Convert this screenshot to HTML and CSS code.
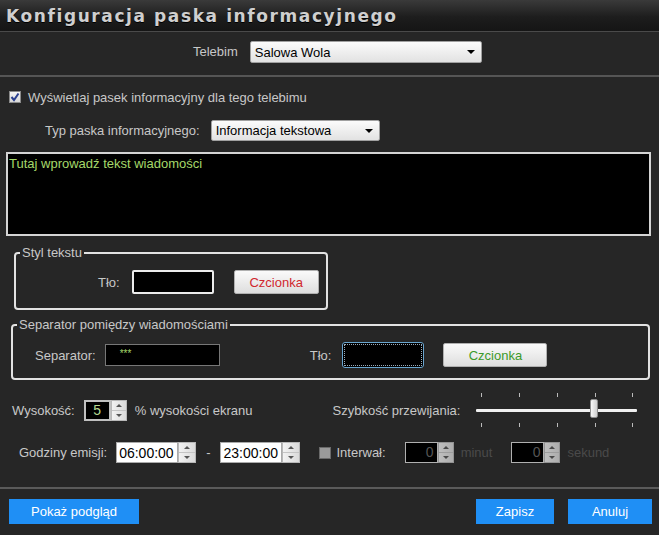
FILE: index.html
```html
<!DOCTYPE html>
<html lang="pl">

<head>
    <meta charset="UTF-8">
    <meta name="viewport" content="width=device-width, initial-scale=1.0">
    <title>Konfiguracja paska informacyjnego</title>
    <link rel="stylesheet" href="styles.css">
</head>

<body>
    <div class="dialog">
        <header class="title-bar">
            <h1 class="title">Konfiguracja paska informacyjnego</h1>
        </header>

        <section class="telebim-row">
            <span class="label">Telebim</span>
            <div class="select select-telebim">Salowa Wola<span class="arrow"></span></div>
        </section>

        <section class="check-row">
            <span class="checkbox">
                <svg width="10" height="10" viewBox="0 0 10 10"><path d="M1.5 5 L4 8 L8.5 1.5" fill="none" stroke="#2a3f8f" stroke-width="2"/></svg>
            </span>
            <span>Wyświetlaj pasek informacyjny dla tego telebimu</span>
        </section>

        <section class="type-row">
            <span class="label">Typ paska informacyjnego:</span>
            <div class="select select-type">Informacja tekstowa<span class="arrow"></span></div>
        </section>

        <div class="message">Tutaj wprowadź tekst wiadomości</div>

        <fieldset class="group group-style">
            <legend>Styl tekstu</legend>
            <div class="group-row style-row">
                <span class="label">Tło:</span>
                <div class="color-box"></div>
                <button class="font-button font-red">Czcionka</button>
            </div>
        </fieldset>

        <fieldset class="group group-separator">
            <legend>Separator pomiędzy wiadomościami</legend>
            <div class="group-row separator-row">
                <span class="label">Separator:</span>
                <div class="separator-input">***</div>
                <span class="label sep-bg-label">Tło:</span>
                <div class="color-box color-box-focus"><span class="focus-ring"></span></div>
                <button class="font-button font-green">Czcionka</button>
            </div>
        </fieldset>

        <section class="height-row">
            <span class="label">Wysokość:</span>
            <div class="spin spin-height">
                <div class="spin-value">5</div>
                <div class="spin-arrows"><span class="up"></span><span class="down"></span></div>
            </div>
            <span class="label">% wysokości ekranu</span>
            <span class="label speed-label">Szybkość przewijania:</span>
            <div class="slider">
                <div class="ticks"><i></i><i></i><i></i><i></i><i></i></div>
                <div class="track"></div>
                <div class="ticks"><i></i><i></i><i></i><i></i><i></i></div>
                <div class="thumb" style="left: 114px"></div>
            </div>
        </section>

        <section class="hours-row">
            <span class="label">Godziny emisji:</span>
            <div class="spin spin-time">
                <div class="spin-value">06:00:00</div>
                <div class="spin-arrows"><span class="up"></span><span class="down"></span></div>
            </div>
            <span class="label dash">-</span>
            <div class="spin spin-time">
                <div class="spin-value">23:00:00</div>
                <div class="spin-arrows"><span class="up"></span><span class="down"></span></div>
            </div>
            <span class="checkbox checkbox-off"></span>
            <span class="label">Interwał:</span>
            <div class="spin spin-off spin-minutes">
                <div class="spin-value">0</div>
                <div class="spin-arrows"><span class="up"></span><span class="down"></span></div>
            </div>
            <span class="label label-off">minut</span>
            <div class="spin spin-off spin-seconds">
                <div class="spin-value">0</div>
                <div class="spin-arrows"><span class="up"></span><span class="down"></span></div>
            </div>
            <span class="label label-off">sekund</span>
        </section>

        <footer class="footer">
            <button class="blue-button preview-button">Pokaż podgląd</button>
            <button class="blue-button save-button">Zapisz</button>
            <button class="blue-button cancel-button">Anuluj</button>
        </footer>
    </div>
</body>

</html>
```

FILE: styles.css
```css
body {
    margin: 0;
    background: #262626;
    overflow: hidden;
}

.dialog {
    width: 659px;
    height: 535px;
    background: #262626;
    color: #c8c8c8;
    font-family: "Liberation Sans", Arial, sans-serif;
    font-size: 13px;
}

.title-bar {
    height: 32px;
    box-sizing: border-box;
    padding-left: 6px;
    display: flex;
    align-items: center;
    background: linear-gradient(#3a3a3a, #1d1d1d 55%, #151515);
    border-bottom: 1px solid #4a4a4a;
}

.title {
    margin: 0;
    font-family: "DejaVu Sans", sans-serif;
    font-size: 17px;
    font-weight: bold;
    letter-spacing: 1.6px;
    color: #cfcfcf;
    text-shadow: 0 1px 0 #000;
}

.label {
    white-space: nowrap;
}

.select {
    height: 22px;
    box-sizing: border-box;
    padding: 0 6px 0 4px;
    display: flex;
    align-items: center;
    justify-content: space-between;
    background: linear-gradient(#fbfbfb, #e2e2e2);
    border: 1px solid #a0a0a0;
    border-radius: 2px;
    color: #000;
}

.arrow {
    width: 0;
    height: 0;
    border-left: 4px solid transparent;
    border-right: 4px solid transparent;
    border-top: 4px solid #000;
}

.telebim-row {
    height: 45px;
    box-sizing: border-box;
    padding: 9px 0 0 193px;
    display: flex;
    align-items: flex-start;
    gap: 12px;
    border-bottom: 2px solid #555;
}

.telebim-row .label {
    line-height: 22px;
}

.select-telebim {
    width: 232px;
}

.check-row {
    height: 20px;
    margin-top: 10px;
    padding-left: 9px;
    display: flex;
    align-items: center;
    gap: 7px;
}

.checkbox {
    width: 12px;
    height: 12px;
    box-sizing: border-box;
    display: flex;
    align-items: center;
    justify-content: center;
    background: linear-gradient(#f4f4f4, #d8d8d8);
    border: 1px solid #8a8a8a;
}

.checkbox-off {
    margin-left: 19px;
    background: #9a9a9a;
    border-color: #6a6a6a;
}

.type-row {
    height: 21px;
    margin-top: 13px;
    padding-left: 45px;
    display: flex;
    align-items: center;
    gap: 11px;
}

.select-type {
    width: 169px;
    height: 21px;
}

.message {
    height: 84px;
    margin: 11px 8px 0 6px;
    box-sizing: border-box;
    padding: 2px 0 0 1px;
    background: #000;
    border: 2px solid #d4d4d4;
    color: #a5d86a;
    line-height: 16px;
}

.group {
    margin: 10px 0 0;
    padding: 0;
    border: 2px solid #e2e2e2;
    border-radius: 4px;
    box-sizing: border-box;
}

.group legend {
    margin-left: 4px;
    padding: 0 2px;
    line-height: 14px;
}

.group-row {
    display: flex;
    align-items: center;
}

.group-style {
    width: 314px;
    margin-left: 14px;
}

.style-row {
    height: 24px;
    margin: 10px 0 14px;
    padding-left: 82px;
}

.color-box {
    width: 82px;
    height: 24px;
    margin-left: 12px;
    box-sizing: border-box;
    background: #000;
    border: 2px solid #ececec;
    border-radius: 2px;
}

.font-button {
    height: 24px;
    margin-left: 20px;
    padding: 0;
    width: 85px;
    font-family: inherit;
    font-size: 13px;
    background: linear-gradient(#fafafa, #dedede);
    border: 1px solid #b0b0b0;
    border-radius: 2px;
}

.font-red {
    color: #d0282e;
}

.font-green {
    width: 104px;
    margin-left: 19px;
    color: #3c9a2a;
}

.group-separator {
    width: 639px;
    margin: 8px 0 0 11px;
}

.separator-row {
    height: 26px;
    margin: 10px 0 10px;
    padding-left: 22px;
}

.separator-input {
    width: 115px;
    height: 22px;
    margin-left: 9px;
    box-sizing: border-box;
    padding: 2px 0 0 14px;
    background: #000;
    border: 1px solid #777;
    color: #a5d86a;
    font-size: 10px;
    line-height: 14px;
}

.sep-bg-label {
    margin-left: 90px;
}

.color-box-focus {
    height: 26px;
    margin-left: 11px;
    padding: 1px;
    border: 1px solid #6aa6d0;
    border-radius: 3px;
}

.focus-ring {
    display: block;
    height: 100%;
    box-sizing: border-box;
    border: 1px dotted #9ab;
}

.height-row {
    height: 34px;
    margin-top: 13px;
    padding-left: 12px;
    display: flex;
    align-items: center;
}

.spin {
    display: flex;
    height: 21px;
    box-sizing: border-box;
}

.spin-value {
    flex: 1;
    box-sizing: border-box;
    line-height: 17px;
}

.spin-arrows {
    width: 16px;
    display: flex;
    flex-direction: column;
    background: linear-gradient(90deg, #f2f2f2, #dadada);
    border: 1px solid #b8b8b8;
    box-sizing: border-box;
}

.spin-arrows span {
    flex: 1;
    display: flex;
    align-items: center;
    justify-content: center;
}

.spin-arrows .up {
    border-bottom: 1px solid #c4c4c4;
}

.spin-arrows .up::after,
.spin-arrows .down::after {
    content: "";
    border-left: 3px solid transparent;
    border-right: 3px solid transparent;
}

.spin-arrows .up::after {
    border-bottom: 3px solid #555;
}

.spin-arrows .down::after {
    border-top: 3px solid #555;
}

.spin-height {
    width: 43px;
    margin: 0 8px 0 9px;
}

.spin-height .spin-value {
    background: #000;
    border: 2px solid #c0c0c0;
    color: #b6d890;
    text-align: center;
    font-size: 14px;
}

.speed-label {
    margin-left: 80px;
}

.slider {
    position: relative;
    width: 161px;
    height: 34px;
    margin-left: 16px;
    display: flex;
    flex-direction: column;
    justify-content: space-between;
}

.ticks {
    height: 4px;
    padding: 0 4px 0 5px;
    display: flex;
    justify-content: space-between;
}

.ticks i {
    width: 1px;
    background: #bbb;
}

.track {
    height: 3px;
    background: #f0f0f0;
    border-radius: 1px;
}

.thumb {
    position: absolute;
    top: 6px;
    width: 8px;
    height: 19px;
    box-sizing: border-box;
    background: linear-gradient(90deg, #f8f8f8, #cfcfcf);
    border: 1px solid #8c8c8c;
    border-radius: 2px;
}

.hours-row {
    height: 21px;
    margin-top: 15px;
    padding-left: 19px;
    display: flex;
    align-items: center;
}

.spin-time {
    width: 80px;
    margin-left: 9px;
}

.spin-time .spin-value {
    padding: 2px 0 0 2px;
    background: #fff;
    border: 1px solid #aaa;
    color: #000;
    font-size: 14px;
}

.spin-time .spin-arrows {
    width: 18px;
}

.dash {
    margin-left: 10px;
}

.hours-row .dash + .spin-time {
    margin-left: 10px;
}

.hours-row .checkbox-off + .label {
    margin-left: 5px;
}

.spin-off {
    width: 49px;
}

.spin-off .spin-value {
    padding: 1px 3px 0 0;
    background: #000;
    border: 1px solid #b0b0b0;
    color: #555;
    text-align: right;
    font-size: 14px;
}

.spin-off .spin-arrows {
    opacity: 0.75;
}

.spin-minutes {
    margin-left: 19px;
}

.spin-seconds {
    margin-left: 19px;
}

.label-off {
    margin-left: 7px;
    color: #4a4a4a;
}

.footer {
    margin-top: 24px;
    padding: 10px 7px 0 9px;
    border-top: 2px solid #5a5a5a;
    display: flex;
    gap: 14px;
}

.blue-button {
    height: 25px;
    padding: 0;
    font-family: inherit;
    font-size: 13px;
    color: #fff;
    background: #1f8ff5;
    border: none;
}

.preview-button {
    width: 130px;
    margin-right: auto;
}

.save-button {
    width: 78px;
}

.cancel-button {
    width: 84px;
}
```
